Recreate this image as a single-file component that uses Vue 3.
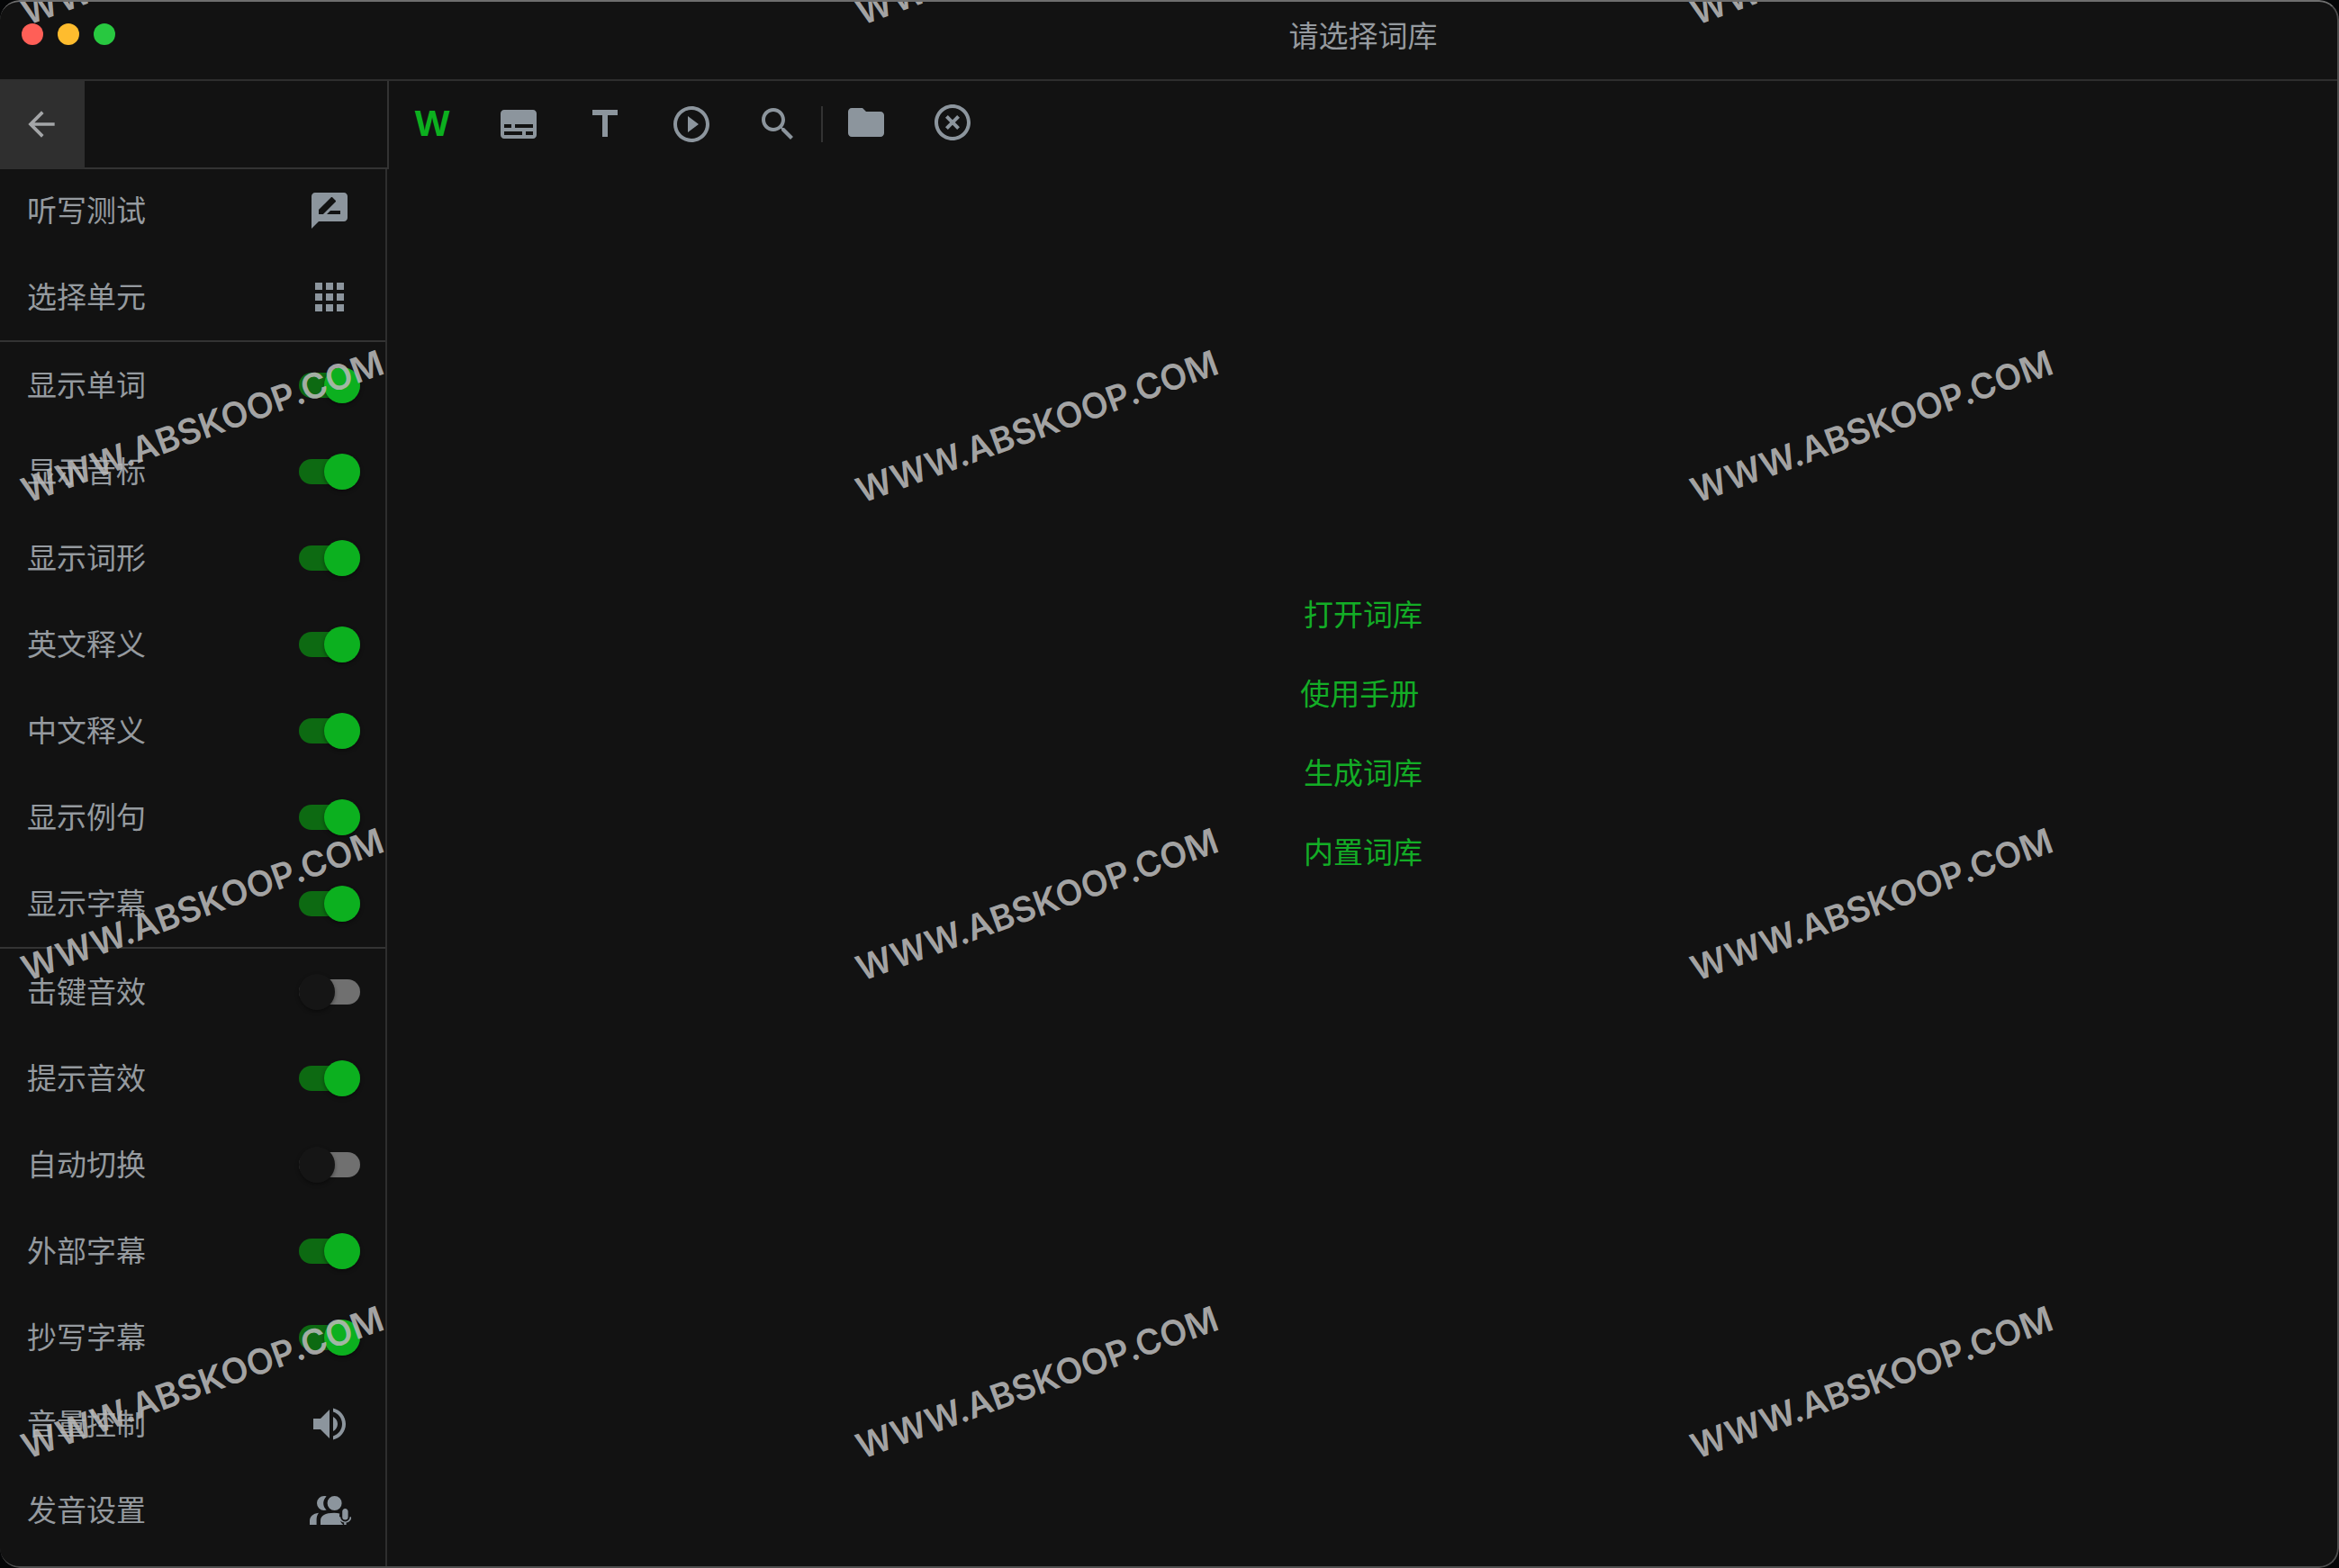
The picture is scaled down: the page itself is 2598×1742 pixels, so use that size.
<script setup>
import { reactive } from 'vue'

const icons = {
  back: 'M20 11H7.83l5.59-5.59L12 4l-8 8 8 8 1.41-1.41L7.83 13H20z',
  subtitles: 'M20 4H4c-1.1 0-2 .9-2 2v12c0 1.1.9 2 2 2h16c1.1 0 2-.9 2-2V6c0-1.1-.9-2-2-2zM4 12h4v2H4v-2zm10 6H4v-2h10v2zm6 0h-4v-2h4v2zm0-4H10v-2h10v2z',
  title: 'M5 4v3h5.5v12h3V7H19V4z',
  play: 'M10 16.5l6-4.5-6-4.5v9zM12 2C6.48 2 2 6.48 2 12s4.48 10 10 10 10-4.48 10-10S17.52 2 12 2zm0 18c-4.41 0-8-3.59-8-8s3.59-8 8-8 8 3.59 8 8-3.59 8-8 8z',
  search: 'M15.5 14h-.79l-.28-.27C15.41 12.59 16 11.11 16 9.5 16 5.91 13.09 3 9.5 3S3 5.91 3 9.5 5.91 16 9.5 16c1.61 0 3.09-.59 4.23-1.57l.27.28v.79l5 4.99L20.49 19l-4.99-5zm-6 0C7.01 14 5 11.99 5 9.5S7.01 5 9.5 5 14 7.01 14 9.5 11.99 14 9.5 14z',
  folder: 'M10 4H4c-1.1 0-1.99.9-1.99 2L2 18c0 1.1.9 2 2 2h16c1.1 0 2-.9 2-2V8c0-1.1-.9-2-2-2h-8l-2-2z',
  close: 'M14.59 8L12 10.59 9.41 8 8 9.41 10.59 12 8 14.59 9.41 16 12 13.41 14.59 16 16 14.59 13.41 12 16 9.41 14.59 8zM12 2C6.47 2 2 6.47 2 12s4.47 10 10 10 10-4.47 10-10S17.53 2 12 2zm0 18c-4.41 0-8-3.59-8-8s3.59-8 8-8 8 3.59 8 8-3.59 8-8 8z',
  review: 'M20 2H4c-1.1 0-1.99.9-1.99 2L2 22l4-4h14c1.1 0 2-.9 2-2V4c0-1.1-.9-2-2-2zM6 14v-2.47l6.88-6.88c.2-.2.51-.2.71 0l1.77 1.77c.2.2.2.51 0 .71L8.47 14H6zm12 0h-7.5l2-2H18v2z',
  apps: 'M4 8h4V4H4v4zm6 12h4v-4h-4v4zm-6 0h4v-4H4v4zm0-6h4v-4H4v4zm6 0h4v-4h-4v4zm6-10v4h4V4h-4zm-6 4h4V4h-4v4zm6 6h4v-4h-4v4zm0 6h4v-4h-4v4z',
  volume: 'M3 9v6h4l5 5V4L7 9H3zm13.5 3c0-1.77-1.02-3.29-2.5-4.03v8.05c1.48-.73 2.5-2.25 2.5-4.02zM14 3.23v2.06c2.89.86 5 3.54 5 6.71s-2.11 5.85-5 6.71v2.06c4.01-.91 7-4.49 7-8.77s-2.99-7.86-7-8.77z',
  voices: 'M9 4c.5 0 .9.1 1.3.2C9.1 5.3 8.6 6.7 8.6 8s.5 2.7 1.7 3.8c-.4.15-.8.2-1.3.2a4 4 0 0 1 0-8zM14.8 4a4 4 0 1 1 0 8 4 4 0 0 1 0-8zM1 20v-2c0-2.6 1.7-4.2 5-4.6C5 14.8 4.8 16 4.8 17.5V20zM7 20v-2.2c0-2.8 2.6-4.4 7.6-4.4 1.1 0 2.1.1 3 .3-.3 2.8.2 4.8 2 6.3zM20.7 11c.9 0 1.6.7 1.6 1.6v3a1.6 1.6 0 0 1-3.2 0v-3c0-.9.7-1.6 1.6-1.6zM17.2 15.6h.9a2.6 2.6 0 0 0 5.200 0h.9c0 1.600-1.200 2.900-2.900 3.200V20h-1.200v-1.200c-1.700-.3-2.900-1.600-2.900-3.200z',
}

const tools = [
  { icon: 'subtitles', label: '字幕' },
  { icon: 'title', label: '文本' },
  { icon: 'play', label: '播放' },
  { icon: 'search', label: '搜索' },
]
const fileTools = [
  { icon: 'folder', label: '打开' },
  { icon: 'close', label: '关闭' },
]

const groups = reactive([
  [
    { label: '听写测试', icon: 'review' },
    { label: '选择单元', icon: 'apps' },
  ],
  [
    { label: '显示单词', on: true },
    { label: '显示音标', on: true },
    { label: '显示词形', on: true },
    { label: '英文释义', on: true },
    { label: '中文释义', on: true },
    { label: '显示例句', on: true },
    { label: '显示字幕', on: true },
  ],
  [
    { label: '击键音效', on: false },
    { label: '提示音效', on: true },
    { label: '自动切换', on: false },
    { label: '外部字幕', on: true },
    { label: '抄写字幕', on: true },
    { label: '音量控制', icon: 'volume' },
    { label: '发音设置', icon: 'voices' },
  ],
])

const links = ['打开词库', '使用手册\u00a0', '生成词库', '内置词库']
</script>

<template>
  <div class="window">
    <header class="titlebar">
      <div class="lights">
        <button class="light red" aria-label="关闭窗口"></button>
        <button class="light yellow" aria-label="最小化"></button>
        <button class="light green" aria-label="全屏"></button>
      </div>
      <h1>请选择词库</h1>
    </header>

    <div class="body">
      <aside class="sidebar">
        <div class="side-head">
          <button class="back" aria-label="返回">
            <svg viewBox="0 0 24 24"><path :d="icons.back" /></svg>
          </button>
        </div>
        <ul v-for="(group, g) in groups" :key="g" class="group">
          <li v-for="item in group" :key="item.label">
            <button v-if="item.icon" class="row">
              <span class="name">{{ item.label }}</span>
              <svg class="icon" viewBox="0 0 24 24"><path :d="icons[item.icon]" /></svg>
            </button>
            <label v-else class="row">
              <span class="name">{{ item.label }}</span>
              <input v-model="item.on" class="switch" type="checkbox" />
            </label>
          </li>
        </ul>
      </aside>

      <main class="main">
        <nav class="toolbar">
          <button class="tool word" aria-label="单词">W</button>
          <button v-for="t in tools" :key="t.icon" class="tool" :aria-label="t.label">
            <svg class="icon" viewBox="0 0 24 24"><path :d="icons[t.icon]" /></svg>
          </button>
          <span class="divider"></span>
          <button v-for="t in fileTools" :key="t.icon" class="tool file" :aria-label="t.label">
            <svg class="icon" viewBox="0 0 24 24"><path :d="icons[t.icon]" /></svg>
          </button>
        </nav>
        <div class="links">
          <a v-for="l in links" :key="l" href="#">{{ l }}</a>
        </div>
      </main>
    </div>

    <div class="watermarks" aria-hidden="true">
      <div v-for="n in 12" :key="n" class="cell"><span>WWW.ABSKOOP.COM</span></div>
    </div>
  </div>
</template>

<style>
body {
  background: #050607;
}
</style>

<style scoped>
.window {
  position: relative;
  display: flex;
  flex-direction: column;
  min-height: 100vh;
  box-sizing: border-box;
  overflow: hidden;
  border-radius: 22px;
  background: #121212;
  color: #959a9f;
  font: 33px/48px "Noto Sans CJK SC", sans-serif;
}
.window::after {
  content: "";
  position: absolute;
  inset: 0;
  border: 2px solid #4d4d4d;
  border-top-color: #6e6e6e;
  border-left: 0;
  border-radius: 22px;
  pointer-events: none;
}
button {
  padding: 0;
  border: 0;
  background: none;
  color: inherit;
  font: inherit;
}
svg {
  display: block;
  fill: currentColor;
}
.icon {
  width: 48px;
  height: 48px;
  color: #8c959d;
}
.titlebar {
  display: grid;
  grid-template-columns: 430px 1fr;
  align-items: start;
  height: 88px;
  border-bottom: 2px solid #2e2e2e;
}
.lights {
  display: flex;
  gap: 16px;
  padding: 26px 24px;
}
.light {
  width: 24px;
  height: 24px;
  border-radius: 50%;
}
.red { background: #ff5f57; }
.yellow { background: #febc2e; }
.green { background: #28c840; }
h1 {
  margin: 0;
  padding-top: 14px;
  font-size: 33px;
  font-weight: 400;
  text-align: center;
}
.body {
  display: flex;
  flex: 1;
}
.sidebar {
  width: 428px;
  border-right: 2px solid #2e2e2e;
}
.side-head {
  width: 430px;
  height: 96px;
  background: #121212;
  box-shadow: 0 2px #333, 2px 0 #333, 2px 2px #333;
}
.back {
  display: grid;
  place-items: center;
  box-sizing: border-box;
  width: 94px;
  height: 98px;
  padding: 0 2px 2px 0;
  background: #2f2f2f;
  color: #a4a6a8;
}
.back svg {
  width: 44px;
  height: 44px;
}
.group {
  margin: 0;
  padding: 0;
  list-style: none;
}
.group + .group {
  border-top: 2px solid #333;
}
.row {
  display: flex;
  align-items: center;
  justify-content: space-between;
  box-sizing: border-box;
  width: 100%;
  height: 96px;
  padding: 0 28px 0 30px;
}
.name {
  padding-bottom: 4px;
}
.row .icon {
  margin-right: 10px;
}
.switch {
  display: flex;
  align-items: center;
  appearance: none;
  width: 68px;
  height: 28px;
  margin: 0;
  border-radius: 14px;
  background: #707070;
}
.switch::before {
  content: "";
  width: 40px;
  height: 40px;
  flex: none;
  border-radius: 50%;
  background: #151515;
  box-shadow: 0 2px 4px rgba(0, 0, 0, 0.4);
}
.switch:checked {
  justify-content: flex-end;
  background: #0d6a12;
}
.switch:checked::before {
  background: #0cb01f;
}
.main {
  flex: 1;
}
.toolbar {
  display: flex;
  align-items: center;
  height: 96px;
  padding-left: 2px;
}
.tool {
  display: grid;
  place-items: center;
  box-sizing: border-box;
  width: 96px;
  height: 96px;
}
.file {
  padding-bottom: 4px;
}
.word {
  padding-bottom: 4px;
  color: #0cb01f;
  font: 700 40px/48px "Noto Sans", sans-serif;
}
.divider {
  width: 2px;
  height: 40px;
  background: #333;
}
.links {
  display: flex;
  flex-direction: column;
  align-items: center;
  gap: 40px;
  padding-top: 471px;
}
.links a {
  color: #13ad26;
  text-decoration: none;
}
.watermarks {
  position: absolute;
  top: -106px;
  left: 33px;
  display: grid;
  grid-template-columns: repeat(3, 927px);
  grid-auto-rows: 531px;
  pointer-events: none;
}
.cell {
  padding-top: 96px;
}
.cell span {
  display: inline-block;
  transform-origin: 0 100%;
  transform: rotate(-20deg);
  color: rgba(184, 184, 184, 0.88);
  font: 600 39px/44px Inter, sans-serif;
  white-space: nowrap;
}
</style>
